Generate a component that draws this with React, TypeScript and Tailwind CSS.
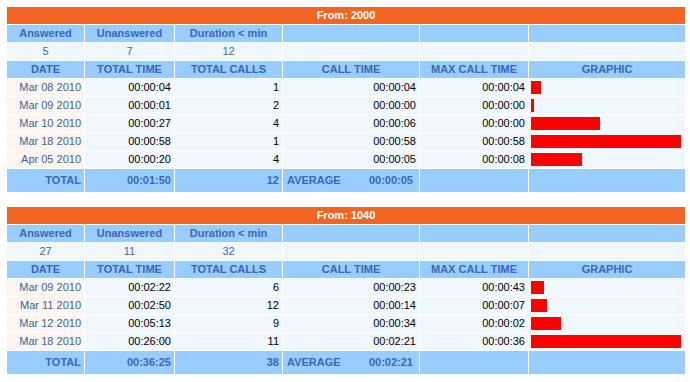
import React from "react";

type Row = { date: string; total: string; calls: string; call: string; max: string; bar: number };
type Report = {
  from: string;
  answered: string;
  unanswered: string;
  duration: string;
  rows: Row[];
  totalTime: string;
  totalCalls: string;
  average: string;
};

const reports: Report[] = [
  {
    from: "2000",
    answered: "5",
    unanswered: "7",
    duration: "12",
    rows: [
      { date: "Mar 08 2010", total: "00:00:04", calls: "1", call: "00:00:04", max: "00:00:04", bar: 10 },
      { date: "Mar 09 2010", total: "00:00:01", calls: "2", call: "00:00:00", max: "00:00:00", bar: 3 },
      { date: "Mar 10 2010", total: "00:00:27", calls: "4", call: "00:00:06", max: "00:00:00", bar: 69 },
      { date: "Mar 18 2010", total: "00:00:58", calls: "1", call: "00:00:58", max: "00:00:58", bar: 150 },
      { date: "Apr 05 2010", total: "00:00:20", calls: "4", call: "00:00:05", max: "00:00:08", bar: 51 },
    ],
    totalTime: "00:01:50",
    totalCalls: "12",
    average: "00:00:05",
  },
  {
    from: "1040",
    answered: "27",
    unanswered: "11",
    duration: "32",
    rows: [
      { date: "Mar 09 2010", total: "00:02:22", calls: "6", call: "00:00:23", max: "00:00:43", bar: 13 },
      { date: "Mar 11 2010", total: "00:02:50", calls: "12", call: "00:00:14", max: "00:00:07", bar: 16 },
      { date: "Mar 12 2010", total: "00:05:13", calls: "9", call: "00:00:34", max: "00:00:02", bar: 30 },
      { date: "Mar 18 2010", total: "00:26:00", calls: "11", call: "00:02:21", max: "00:00:36", bar: 150 },
    ],
    totalTime: "00:36:25",
    totalCalls: "38",
    average: "00:02:21",
  },
];

const hdr = "bg-[#99ccff] h-[17px] flex items-center justify-center font-bold text-[#3c66b8]";
const data = "bg-[#f0f7ff] h-[17px] flex items-center justify-end pr-[3px] text-black";
const tot = "bg-[#99ccff] h-[23px] flex items-center justify-end pr-[3px] font-bold text-[#3c66b8]";

function ReportTable({ r }: { r: Report }) {
  return (
    <div className="grid w-[678px] grid-cols-[77px_89px_107px_136px_108px_156px] gap-px bg-white">
      <div className="col-span-6 bg-[#f36523] h-[17px] flex items-center justify-center font-bold text-white">
        From: {r.from}
      </div>
      <div className={hdr}>Answered</div>
      <div className={hdr}>Unanswered</div>
      <div className={hdr}>Duration &lt; min</div>
      <div className={hdr}></div>
      <div className={hdr}></div>
      <div className={hdr}></div>

      <div className="bg-[#f0f7ff] h-[17px] flex items-center justify-center text-[#3c66b8]">{r.answered}</div>
      <div className="bg-[#f0f7ff] h-[17px] flex items-center justify-center text-[#3c66b8]">{r.unanswered}</div>
      <div className="bg-[#f0f7ff] h-[17px] flex items-center justify-center text-[#3c66b8]">{r.duration}</div>
      <div className="bg-[#f0f7ff] h-[17px]"></div>
      <div className="bg-[#f0f7ff] h-[17px]"></div>
      <div className="bg-[#f0f7ff] h-[17px]"></div>

      <div className={hdr}>DATE</div>
      <div className={hdr}>TOTAL TIME</div>
      <div className={hdr}>TOTAL CALLS</div>
      <div className={hdr}>CALL TIME</div>
      <div className={hdr}>MAX CALL TIME</div>
      <div className={hdr}>GRAPHIC</div>

      {r.rows.map((row) => (
        <React.Fragment key={row.date}>
          <div className="bg-[#fff4ef] h-[17px] flex items-center justify-end pr-[3px] text-[#336699]">{row.date}</div>
          <div className={data}>{row.total}</div>
          <div className={data}>{row.calls}</div>
          <div className={data}>{row.call}</div>
          <div className={data}>{row.max}</div>
          <div className="bg-[#f0f7ff] h-[17px] flex items-center pl-[2px]">
            <div className="h-[13px] bg-[#ff0000]" style={{ width: row.bar }} />
          </div>
        </React.Fragment>
      ))}

      <div className={tot}>TOTAL</div>
      <div className={tot}>{r.totalTime}</div>
      <div className={tot}>{r.totalCalls}</div>
      <div className="bg-[#99ccff] h-[23px] flex items-center justify-between pl-[4px] pr-[6px] font-bold text-[#3c66b8]">
        <span>AVERAGE</span>
        <span>{r.average}</span>
      </div>
      <div className="bg-[#99ccff] h-[23px]"></div>
      <div className="bg-[#99ccff] h-[23px]"></div>
    </div>
  );
}

export default function App() {
  return (
    <div className="bg-white w-[690px] h-[382px] pt-[7px] pl-[7px] text-[11px] leading-none font-['Liberation_Sans',Arial,sans-serif]">
      <div className="flex flex-col gap-[15px]">
        {reports.map((r) => (
          <ReportTable key={r.from} r={r} />
        ))}
      </div>
    </div>
  );
}
